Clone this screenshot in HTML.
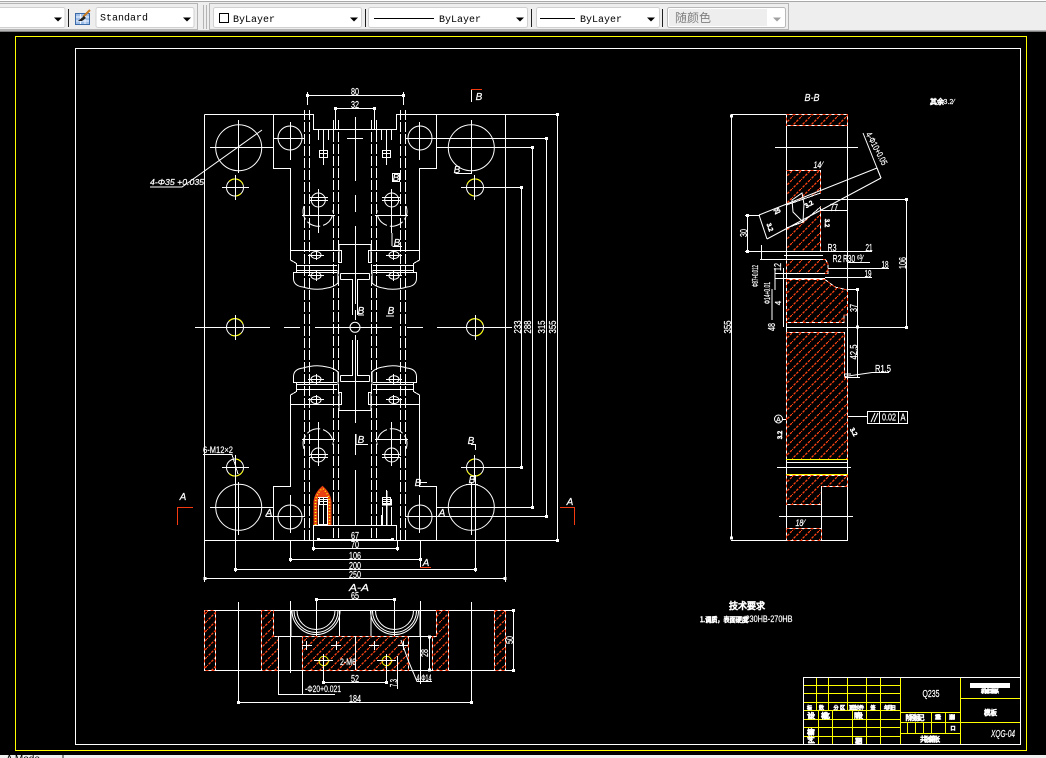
<!DOCTYPE html>
<html><head><meta charset="utf-8"><title>CAD</title>
<style>
html,body{margin:0;padding:0;background:#000;width:1046px;height:758px;overflow:hidden}
svg{display:block;position:absolute;left:0;top:0}
.w{fill:none;stroke:#fff;stroke-width:1;shape-rendering:crispEdges}
.wa{fill:none;stroke:#fff;stroke-width:1}
.y{fill:none;stroke:#ff0;stroke-width:1;shape-rendering:crispEdges}
.r{fill:none;stroke:#f33a10;stroke-width:1;shape-rendering:crispEdges}
.d{fill:none;stroke:#fff;stroke-width:1;stroke-dasharray:10 2;shape-rendering:crispEdges}
.dm{fill:none;stroke:#fff;stroke-width:1;shape-rendering:crispEdges;marker-start:url(#m);marker-end:url(#m)}
.h{fill:url(#hp);stroke:#fff;stroke-width:1;shape-rendering:crispEdges}
.hr{fill:none;stroke:#f33a10;stroke-width:1;stroke-dasharray:3 3;shape-rendering:crispEdges}
.t{font-family:"Liberation Sans","Noto Sans CJK SC",sans-serif;font-size:10px;fill:#fff;stroke:#fff;stroke-width:.2;text-anchor:middle;font-style:italic}
.n{font-family:"Liberation Sans","Noto Sans CJK SC",sans-serif;font-size:10px;fill:#fff;stroke:#fff;stroke-width:.2;text-anchor:middle}
.b{font-family:"Noto Sans CJK SC","WenQuanYi Zen Hei",sans-serif;font-size:7px;fill:#fff;stroke:#fff;stroke-width:.7;text-anchor:middle}
.m{font-family:"Liberation Mono",monospace;font-size:10px;fill:#000}
</style></head>
<body>
<svg width="1046" height="758" viewBox="0 0 1046 758" xmlns="http://www.w3.org/2000/svg">
<defs>
<pattern id="hp" patternUnits="userSpaceOnUse" width="9" height="9">
<path d="M-1 10L10 -1" stroke="#ff4412" stroke-width="1.3" stroke-dasharray="2.6 1.2"/>
</pattern>
<marker id="m" markerUnits="userSpaceOnUse" markerWidth="3" markerHeight="3" refX="1.5" refY="1.5"><rect width="3" height="3" fill="#fff"/></marker>
<g id="q">
<path class="w" d="M204.5 114.5H313.5V129.5H355M273.5 114.5V168.5H290.5V250.5M204.5 114.5V327"/>
<circle class="wa" cx="238.7" cy="147.7" r="23"/>
<path class="w" d="M210 147.5H273.5M238.5 120V173"/>
<circle class="wa" cx="290" cy="138" r="12"/>
<path class="w" d="M273 138.5H305M290.5 122V160"/>
<circle class="wa" cx="235" cy="187.5" r="8.5"/>
<path class="y" style="shape-rendering:auto" d="M229 181.5A8.5 8.5 0 0 1 243 184.5M241 193.5A8.5 8.5 0 0 1 235 196"/>
<path class="w" d="M222 187.5H249M235.5 175V200"/>
<circle class="wa" cx="318.3" cy="200" r="7"/>
<path class="w" d="M309 200.5H328M309 197.5H328M318.5 189V233M302 215.5H335"/>
<path class="wa" stroke-dasharray="14 3" d="M304 206A15 15 0 1 0 333 210"/>
<path class="w" d="M290.5 250.5H341.5V262.5H338M290.5 250.5V260L296.5 263.5V272.5H293.5V279"/>
<path class="wa" d="M293.5 279Q294 286 303 287Q316 291 327 288Q334 287 338 283"/>
<path class="w" d="M296 265.5H337M296 270.5H337M296 272.5H337"/>
<ellipse class="wa" cx="316" cy="255" rx="5" ry="3.5"/>
<path class="w" d="M308 255.5H324M316.5 250V260"/>
<ellipse class="wa" cx="316" cy="275.7" rx="5" ry="3.5"/>
<path class="w" d="M308 275.5H324M316.5 271V281"/>
<path class="w" d="M339 250V244.5H355M339 250V262.5H341M340.5 273.5H355M340.5 279.5H352.5V315M340.5 273.5V279.5M338 270V284"/>
<path class="w" d="M318.5 130V140M323.5 130V165M328.5 130V140M319.5 150.5H327.5V157.5H319.5ZM319.5 153.5H327.5M333.5 130V136"/>
<path class="w" d="M336 129.5H342"/>
</g>
<g id="qq"><use href="#q"/><use href="#q" transform="matrix(-1 0 0 1 710 0)"/></g>
</defs>

<!-- toolbar -->
<rect x="0" y="0" width="1046" height="32" fill="#eeeeee"/>
<rect x="0" y="0" width="1046" height="1" fill="#fff"/>
<rect x="0" y="1" width="1046" height="1" fill="#a8a8a8"/>
<rect x="0" y="30" width="1046" height="1" fill="#b8b8b8"/>
<rect x="0" y="31" width="1046" height="1" fill="#808080"/>
<path d="M-2 3.5H197.5V29.5H-2Z" fill="none" stroke="#b4b4b4"/>
<path d="M209.5 3.5H788.5V29.5H209.5Z" fill="none" stroke="#b4b4b4"/>
<path d="M203.5 5V29M206.5 5V29" stroke="#b4b4b4" fill="none"/>
<g fill="#fff" stroke="#d0d0d0">
<rect x="-5" y="7.5" width="70" height="20" rx="2"/>
<rect x="96" y="7.5" width="98" height="20" rx="2"/>
<rect x="213.5" y="7.5" width="148" height="20" rx="2"/>
<rect x="368.5" y="7.5" width="159" height="20" rx="2"/>
<rect x="536.5" y="7.5" width="123" height="20" rx="2"/>
</g>
<rect x="667.5" y="7.5" width="118" height="20" rx="2" fill="#fff" stroke="#b8b8b8"/>
<rect x="669" y="9" width="98" height="17" fill="#eeeeee"/>
<g stroke="#202020" fill="none"><path d="M68.5 9V27M365.5 9V27M531.5 9V27M662.5 9V27"/></g>
<rect x="75.5" y="13.5" width="14" height="11" fill="#9fbfe8" stroke="#3a6aa8"/>
<path d="M76 17H89M76 21H89M80.5 14V24M85 14V24" stroke="#f0f6ff" fill="none"/>
<path d="M90 10L83 17" stroke="#c87a20" stroke-width="2"/>
<path d="M84 16L78 21L82 21L86 18Z" fill="#222"/>
<g fill="#000">
<path d="M54 17.5h8l-4 4z"/><path d="M183 17.5h8l-4 4z"/><path d="M350 17.5h8l-4 4z"/><path d="M516 17.5h8l-4 4z"/><path d="M647 17.5h8l-4 4z"/>
</g>
<path d="M773 17.5h8l-4 4z" fill="#a0a0a0"/>
<text class="m" x="100" y="20.5">Standard</text>
<rect x="219.5" y="13.5" width="9" height="9" fill="#fff" stroke="#000"/>
<text class="m" x="233" y="22">ByLayer</text>
<path d="M374 18.5H434M540 18.5H575" stroke="#000"/>
<text class="m" x="439" y="22">ByLayer</text>
<text class="m" x="580" y="22">ByLayer</text>
<text x="675" y="22" style="font-family:'Noto Sans CJK SC',sans-serif;font-size:12px;fill:#808080">随颜色</text>

<!-- frames -->
<rect class="y" x="15.5" y="36.5" width="1011" height="714"/>
<rect class="w" x="75.5" y="48.5" width="945" height="696"/>

<!-- main view -->
<use href="#qq"/>
<use href="#qq" transform="matrix(1 0 0 -1 0 655)"/>
<g>
<circle class="wa" cx="355" cy="327.3" r="5"/>
<circle class="wa" cx="235" cy="327.3" r="8.5"/>
<circle class="wa" cx="475" cy="327.3" r="8.5"/>
<path class="y" style="shape-rendering:auto" d="M229 321A8.5 8.5 0 0 1 243 324M241 333A8.5 8.5 0 0 1 231 335M469 321A8.5 8.5 0 0 1 483 325M483 330A8.5 8.5 0 0 1 475 336"/>
<path class="w" d="M195 327.5H270M284 327.5H300M315 327.5H392M407 327.5H423M437 327.5H512M235.5 315V340M475.5 315V340"/>
<path class="w" d="M355.5 117V181M355.5 195V212M355.5 226V304M355.5 310V320M355.5 335V423M355.5 434V455M355.5 470V525M347 138.5H363"/>
<path class="d" d="M304.5 110V540M309.5 110V540M333.5 120V540M338.5 120V540M371.5 120V540M376.5 120V540M400.5 110V540M405.5 110V540"/>
<path class="w" d="M505.5 114.5H558M420 138.5H547M494 147.5H533M484 187.5H522M488 467.5H522M494 507.5H533M420 516.5H547M205 540.5H558"/>
<path class="dm" d="M521.5 187.5V467.5"/><path class="dm" d="M532.5 147.5V507.5"/><path class="dm" d="M546.5 138.5V516.5"/><path class="dm" d="M557.5 114.5V540.5"/>
<text class="n" textLength="13" lengthAdjust="spacingAndGlyphs" transform="translate(521,327) rotate(-90)">233</text>
<text class="n" textLength="13" lengthAdjust="spacingAndGlyphs" transform="translate(531,327) rotate(-90)">288</text>
<text class="n" textLength="13" lengthAdjust="spacingAndGlyphs" transform="translate(545,327) rotate(-90)">315</text>
<text class="n" textLength="13" lengthAdjust="spacingAndGlyphs" transform="translate(556,327) rotate(-90)">355</text>
<path class="w" d="M307.5 92V105M403.5 92V105M335.5 107V130M374.5 107V130"/>
<path class="dm" d="M307.5 95.5H403.5"/><path class="dm" d="M335.5 108.5H374.5"/>
<text class="n" x="355" y="95" textLength="8" lengthAdjust="spacingAndGlyphs">80</text>
<text class="n" x="355" y="108" textLength="8" lengthAdjust="spacingAndGlyphs">32</text>
<path class="w" d="M471.5 89V102"/><path class="r" d="M471 89.5H482"/>
<text class="t" x="479" y="100">B</text>
<path class="wa" d="M150 187H182L262 130"/>
<text class="t" x="177" y="185" textLength="54" lengthAdjust="spacingAndGlyphs" style="font-size:8px">4-Φ35 +0.035</text>
<path class="w" d="M455.5 173.5H472"/>
<text class="t" x="457" y="173">B</text>
<rect class="w" x="392.5" y="173.5" width="7" height="8"/><text class="t" x="396" y="181">B</text>
<text class="t" x="397" y="246">B</text><path class="w" d="M392 233V246M392.5 246.5H402"/>
<text class="t" x="361" y="314">B</text><path class="w" d="M358 315H364"/>
<text class="t" x="391" y="314">B</text><path class="w" d="M386 316H394"/>
<text class="t" x="361" y="443">B</text><path class="w" d="M356 444.5H368M356 434V445"/>
<text class="t" x="471" y="444">B</text><path class="w" d="M471 444.5H475.5V450"/>
<text class="t" x="472" y="483">B</text><path class="w" d="M466 484.5H478"/>
<text class="t" x="418" y="486">B</text><path class="w" d="M420 482.5H427"/>
<text class="t" x="269" y="516">A</text><path class="w" d="M265.5 516.5H280"/>
<text class="t" x="442" y="516">A</text><path class="w" d="M430 516.5H446"/>
<text class="n" x="218" y="453" textLength="30" lengthAdjust="spacingAndGlyphs" style="font-size:9px">6-M12×2</text>
<path class="w" d="M203 454.5H232L238 474"/>
<!-- bottom hatch bolt -->
<path d="M315.5 525V503Q315.5 495 322.5 488.5Q329.5 495 329.5 503V525" fill="none" stroke="#e84010" stroke-width="4"/>
<path d="M315.5 525V503Q315.5 495 322.5 488.5Q329.5 495 329.5 503V525" fill="none" stroke="#ff0" stroke-width="1.6" stroke-dasharray="1 2"/>
<path d="M317 498Q319 492 322.5 489Q326 492 328 498Z" fill="#e84010"/>
<rect class="w" x="318.5" y="499.5" width="9" height="25"/><path class="w" d="M318 497.5H328M323.5 499V525"/>
<path class="w" d="M382.5 499.5H391.5V505H382.5ZM382 503.5H392M382.5 507V525M391.5 507V525M387 491V525"/>
<path class="w" d="M204.5 540V582M235.5 475V572M475.5 475V572M505.5 540V582M290.5 540V562M420.5 540V562M313.5 540V551M397.5 540V551"/>
<path class="dm" d="M318.5 539.5H392.5"/><path class="dm" d="M313.5 548.5H397.5"/><path class="dm" d="M290.5 559.5H420.5"/><path class="dm" d="M235.5 569.5H475.5"/><path class="dm" d="M205 578.5H505"/>
<text class="n" x="355" y="539" textLength="8" lengthAdjust="spacingAndGlyphs">67</text>
<text class="n" x="355" y="548" textLength="8" lengthAdjust="spacingAndGlyphs">70</text>
<text class="n" x="355" y="559" textLength="12" lengthAdjust="spacingAndGlyphs">106</text>
<text class="n" x="355" y="569" textLength="12" lengthAdjust="spacingAndGlyphs">200</text>
<text class="n" x="355" y="578" textLength="12" lengthAdjust="spacingAndGlyphs">250</text>
<text class="t" x="359" y="591" textLength="20" lengthAdjust="spacingAndGlyphs">A-A</text>
<text class="t" x="426" y="566">A</text>
<path class="w" d="M420.5 561V567"/><path class="r" d="M420 567.5H431"/>
<text class="t" x="183" y="500">A</text>
<path class="r" d="M177.5 525V507.5H193"/>
<text class="t" x="570" y="505">A</text>
<path class="r" d="M574.5 525V507.5H560"/>
</g>

<!-- section A-A -->
<path class="w" d="M204 610.5H505M204 670.5H505M273 636.5H437M339.5 610.5V636M291 610.5V636M371 610.5V636M420 610.5V636"/>
<path class="h" d="M204.5 610.5H215.5V670.5H204.5Z"/><path class="hr" d="M204.5 610.5H215.5V670.5H204.5Z"/>
<path class="h" d="M261.5 610.5H273.5V636.5H278.5V670.5H261.5Z"/><path class="hr" d="M261.5 610.5H273.5V636.5H278.5V670.5H261.5Z"/>
<path class="h" d="M436.5 610.5H448.5V670.5H432.5V636.5H436.5Z"/><path class="hr" d="M436.5 610.5H448.5V670.5H432.5V636.5H436.5Z"/>
<path class="h" d="M494.5 610.5H505.5V670.5H494.5Z"/><path class="hr" d="M494.5 610.5H505.5V670.5H494.5Z"/>
<path class="h" d="M302.5 636.5H408.5V670.5H302.5Z"/><path class="hr" d="M302.5 636.5H408.5V670.5H302.5Z"/>
<path class="wa" d="M292 610.5A24 24 0 0 0 340 610.5M294 610.5A22 22 0 0 0 338 610.5M297 610.5A19 19 0 0 0 335 610.5M370.5 610.5A24 24 0 0 0 418.5 610.5M372.5 610.5A22 22 0 0 0 416.5 610.5M375.5 610.5A19 19 0 0 0 413.5 610.5"/>
<path class="w" d="M238.5 602V703M471.5 602V703M290.5 601V673M420.5 601V684M316.5 598V636M394.5 598V636M355.5 636V670"/>
<path class="dm" d="M316.5 599.5H394.5"/><path class="dm" d="M238.5 702.5H471.5"/><path class="dm" d="M513.5 610.5V670.5"/><path class="dm" d="M429.5 637V670"/>
<path class="w" d="M505 610.5H515M505 670.5H515M278.5 636V695M302.5 670V695M278 694.5H335M323.5 655V683M386.5 655V683M397.5 656V689"/>
<path class="dm" d="M323.5 682.5H386.5"/>
<text class="n" x="355" y="599" textLength="8" lengthAdjust="spacingAndGlyphs">65</text>
<text class="n" x="355" y="702" textLength="12" lengthAdjust="spacingAndGlyphs">184</text>
<text class="n" x="355" y="682" textLength="8" lengthAdjust="spacingAndGlyphs">52</text>
<text class="n" transform="translate(513,640) rotate(-90)" textLength="8" lengthAdjust="spacingAndGlyphs">50</text>
<text class="n" transform="translate(428,653) rotate(-90)" textLength="8" lengthAdjust="spacingAndGlyphs">28</text>
<text class="n" transform="translate(397,683) rotate(-90)" textLength="8" lengthAdjust="spacingAndGlyphs">7.3</text>
<text class="n" x="323" y="692" textLength="36" lengthAdjust="spacingAndGlyphs" style="font-size:9px">-Φ20+0.021</text>
<text class="n" x="348" y="665" textLength="16" lengthAdjust="spacingAndGlyphs" style="font-size:9px">2-M6</text>
<text class="n" x="424" y="681" textLength="15" lengthAdjust="spacingAndGlyphs" style="font-size:9px">4-Φ14</text>
<path class="wa" d="M432 681.5H417L408 660L401 640"/>
<circle cx="323.7" cy="661" r="4.7" fill="none" stroke="#ff0"/>
<circle cx="386.7" cy="661" r="4.7" fill="none" stroke="#ff0"/>
<path class="w" d="M314 660.5H333M323.5 654V668M377 660.5H396M386.5 654V668"/>
<path class="w" d="M302 645.5H312M306.5 641V650M331 645.5H341M336.5 641V650M369 645.5H379M374.5 641V650M398 645.5H408M403.5 641V650"/>

<!-- B-B section -->
<text class="t" x="812" y="101" textLength="15" lengthAdjust="spacingAndGlyphs">B-B</text>
<path class="w" d="M786.5 114.5H847.5V540.5H786.5ZM731 114.5H786M731 540.5H786"/>
<path class="dm" d="M731.5 116V538"/>
<text class="n" transform="translate(731,327) rotate(-90)" textLength="13" lengthAdjust="spacingAndGlyphs">355</text>
<path class="h" d="M786.5 114.5H847.5V125.5H786.5Z"/><path class="hr" d="M786.5 114.5H847.5V125.5H786.5Z"/>
<path class="w" d="M775 147.5H858"/>
<path class="h" d="M786.5 170.5H820.5V193L786.5 205Z"/>
<path class="h" d="M786.5 228L803 222L820.5 207V251.5H786.5Z"/>
<path class="hr" d="M786.5 170.5H820.5V193M786.5 251.5H820.5V207"/>
<path class="wa" d="M759 215L877 168M767 239L881 178M759 215L767 239M877 168L881 178"/>
<path class="wa" d="M792 200L802 193L804 204L803 222L793 212Z"/>
<path class="h" d="M786.5 259.5H825.5L828 264V273.5H786.5Z"/><path class="hr" d="M786.5 259.5H825.5L828 264V273.5H786.5Z"/>
<path class="h" d="M786.5 279.5H825L835 287L847.5 290V315H844V322.5H786.5Z"/><path class="hr" d="M786.5 279.5H825L835 287L847.5 290V315H844V322.5H786.5Z"/>
<path class="w" d="M786 327.5H908M784 255.5H823M760 259.5H823M775 273.5H825M775 278.5H825M775 268V290M783.5 268V327M761.5 245V260M772 289V320"/>
<path class="h" d="M786.5 332.5H844.5V377.5H847.5V459.5H786.5Z"/><path class="hr" d="M786.5 332.5H844.5V377.5H847.5V459.5H786.5Z"/>
<path class="y" d="M786 459.5H848M786 474.5H848"/>
<path class="w" d="M777 467.5H851M786 462.5H848"/>
<path class="h" d="M786.5 475.5H847.5V486.5H821.5V504.5H786.5Z"/><path class="hr" d="M786.5 475.5H847.5V486.5H821.5V504.5H786.5Z"/>
<path class="w" d="M779 516.5H853M821.5 486V540"/>
<path class="h" d="M786.5 528.5H821.5V540.5H786.5Z"/><path class="hr" d="M786.5 528.5H821.5V540.5H786.5Z"/>
<path class="w" d="M820 199.5H907M820 210.5H847M745 215.5H760M745 251.5H872M847 262.5H870M828 268.5H889M825 277.5H872M847 289.5H859M845 377.5H860M844 374H851"/>
<path class="dm" d="M747.5 215.5V251.5"/><path class="dm" d="M906.5 199.5V327.5"/><path class="dm" d="M857.5 289.5V327"/><path class="w" d="M857.5 327V377"/>
<text class="n" transform="translate(747,233) rotate(-90)" textLength="8" lengthAdjust="spacingAndGlyphs">30</text>
<text class="n" transform="translate(906,263) rotate(-90)" textLength="12" lengthAdjust="spacingAndGlyphs">106</text>
<text class="n" transform="translate(857,308) rotate(-90)" textLength="8" lengthAdjust="spacingAndGlyphs">37</text>
<text class="n" transform="translate(857,352) rotate(-90)" textLength="15" lengthAdjust="spacingAndGlyphs">42.5</text>
<text class="n" x="834" y="211" textLength="8" lengthAdjust="spacingAndGlyphs">77</text>
<text class="n" x="869" y="251" textLength="7" lengthAdjust="spacingAndGlyphs">21</text>
<text class="n" x="832" y="251" textLength="9" lengthAdjust="spacingAndGlyphs">R3</text>
<text class="n" x="837" y="262" textLength="9" lengthAdjust="spacingAndGlyphs">R2</text>
<text class="n" x="853" y="262" textLength="20" lengthAdjust="spacingAndGlyphs">R30 ⁶³⁄</text>
<text class="n" x="885" y="268" textLength="7" lengthAdjust="spacingAndGlyphs">18</text>
<text class="n" x="868" y="277" textLength="7" lengthAdjust="spacingAndGlyphs">19</text>
<text class="n" x="883" y="372" textLength="16" lengthAdjust="spacingAndGlyphs">R1.5</text>
<path class="wa" d="M845 376.5L872 372.5H889"/>
<text class="n" transform="translate(874,150) rotate(62)" textLength="36" lengthAdjust="spacingAndGlyphs" style="font-size:9px">4-Φ10+0.05</text>
<path class="wa" d="M863 133L881 178"/>
<text class="t" x="818" y="168" textLength="9" lengthAdjust="spacingAndGlyphs" style="font-size:9px">14⁄</text>
<text class="t" x="800" y="526" textLength="9" lengthAdjust="spacingAndGlyphs" style="font-size:9px">18⁄</text>
<rect class="w" x="867.5" y="411.5" width="40" height="12"/>
<path class="w" d="M879.5 412V423M898.5 412V423M848 416.5H867"/>
<path class="wa" d="M871 422L875 413M874 422L878 413"/>
<text class="n" x="889" y="420.5" textLength="14" lengthAdjust="spacingAndGlyphs">0.02</text>
<text class="n" x="903" y="420.5" textLength="5" lengthAdjust="spacingAndGlyphs">A</text>
<circle class="wa" cx="778.5" cy="419" r="4"/><path class="w" d="M782 419.5H786"/>
<text class="n" x="778.5" y="422" style="font-size:7px">A</text>
<text class="b" transform="translate(782,435) rotate(-90)" style="font-size:6px">3.2</text>
<text class="b" transform="translate(852,433) rotate(60)" style="font-size:6px">3.2</text>
<text class="b" transform="translate(825,223) rotate(90)" style="font-size:6px">3.2</text>
<text class="b" transform="translate(810,206) rotate(-30)" style="font-size:6px">3.2</text>
<text class="b" transform="translate(778,213) rotate(-25)" style="font-size:6px">25</text>
<text class="b" transform="translate(768,228) rotate(70)" style="font-size:6px">3.2</text>
<text class="n" transform="translate(758,276) rotate(-90)" textLength="22" lengthAdjust="spacingAndGlyphs" style="font-size:8px">Φ87+0.012</text>
<text class="n" transform="translate(770,293) rotate(-90)" textLength="22" lengthAdjust="spacingAndGlyphs" style="font-size:8px">Φ14+0.01</text>
<text class="n" transform="translate(781,267) rotate(-90)" textLength="8" lengthAdjust="spacingAndGlyphs">12</text>
<text class="n" transform="translate(781,303) rotate(-90)" style="font-size:8px">4</text>
<text class="n" transform="translate(775,327) rotate(-90)" textLength="8" lengthAdjust="spacingAndGlyphs">48</text>

<!-- notes -->
<text class="b" x="937" y="104" textLength="14" lengthAdjust="spacingAndGlyphs">其余</text>
<text class="n" x="949" y="104" style="font-size:7px">3.2⁄</text>
<text class="b" x="747" y="609" style="font-size:9px">技术要求</text>
<text class="b" x="724" y="622" textLength="48" lengthAdjust="spacingAndGlyphs" style="font-size:7px">1.调质，表面硬度</text>
<text class="n" x="769" y="622" textLength="47" lengthAdjust="spacingAndGlyphs" style="font-size:9px">230HB-270HB</text>

<!-- title block -->
<path class="y" d="M803 685.5H900M803 693.5H900M803 702.5H900M803 710.5H900M803 719.5H900M803 727.5H900M803 736.5H900"/>
<path class="y" d="M816.5 678V710M828.5 678V710M847.5 678V710M866.5 678V744M880.5 678V744M818.5 711V744M832.5 711V744M852.5 711V744M900.5 678V744"/>
<path class="y" d="M901 712.5H960M901 722.5H960M901 733.5H960M931.5 713V733M945.5 713V733M907.5 723V733M915.5 723V733M923.5 723V733"/>
<path class="y" d="M960.5 678V744M961 698.5H1020M961 722.5H1020"/>
<rect class="w" x="803.5" y="677.5" width="217" height="67"/>
<text class="n" x="931" y="697" textLength="17" lengthAdjust="spacingAndGlyphs">Q235</text>
<text class="t" x="1003" y="737" textLength="24" lengthAdjust="spacingAndGlyphs">XQG-04</text>
<rect x="970" y="683" width="40" height="5" fill="#fff"/>
<text class="b" x="990" y="693" textLength="18" style="font-size:5px">机械工程系</text>
<text class="b" x="990.5" y="715" textLength="13" lengthAdjust="spacingAndGlyphs">模板</text>
<text class="b" x="809.5" y="709.5" textLength="5" style="font-size:5px">标</text>
<text class="b" x="821.5" y="709.5" textLength="5" style="font-size:5px">数</text>
<text class="b" x="836" y="709.5" style="font-size:5px">分</text><text class="b" x="842.5" y="709.5" style="font-size:5px">区</text>
<text class="b" x="856.5" y="709.5" textLength="15" style="font-size:5px">更改文件</text>
<text class="b" x="873" y="709.5" textLength="6" style="font-size:5px">签</text>
<text class="b" x="890" y="709.5" textLength="12" style="font-size:5px">年月日</text>
<text class="b" x="811" y="718" textLength="6">设计</text>
<text class="b" x="825.5" y="718" textLength="9">标准化</text>
<text class="b" x="858.5" y="718" textLength="9">阶段</text>
<text class="b" x="811" y="734.5" textLength="6">审核</text>
<text class="b" x="811" y="742.5" textLength="6">工艺</text>
<text class="b" x="859" y="743.5" textLength="6">日期</text>
<text class="b" x="915" y="720" textLength="19">阶段标记</text>
<text class="b" x="938" y="719" textLength="6" style="font-size:5px">重量</text>
<text class="b" x="952" y="719" textLength="6" style="font-size:5px">比例</text>
<text class="b" x="953" y="730" style="font-size:5px">口</text>
<text class="b" x="930" y="741.5" textLength="20">共 张第 张</text>

<!-- bottom strip -->
<rect x="0" y="755" width="1046" height="3" fill="#f0f0f0"/>
<rect x="62.5" y="755" width="1" height="3" fill="#222"/>
<text x="6" y="762" style="font-family:'Liberation Sans',sans-serif;font-size:10px;fill:#000">A  Mode</text>
</svg>
</body></html>
